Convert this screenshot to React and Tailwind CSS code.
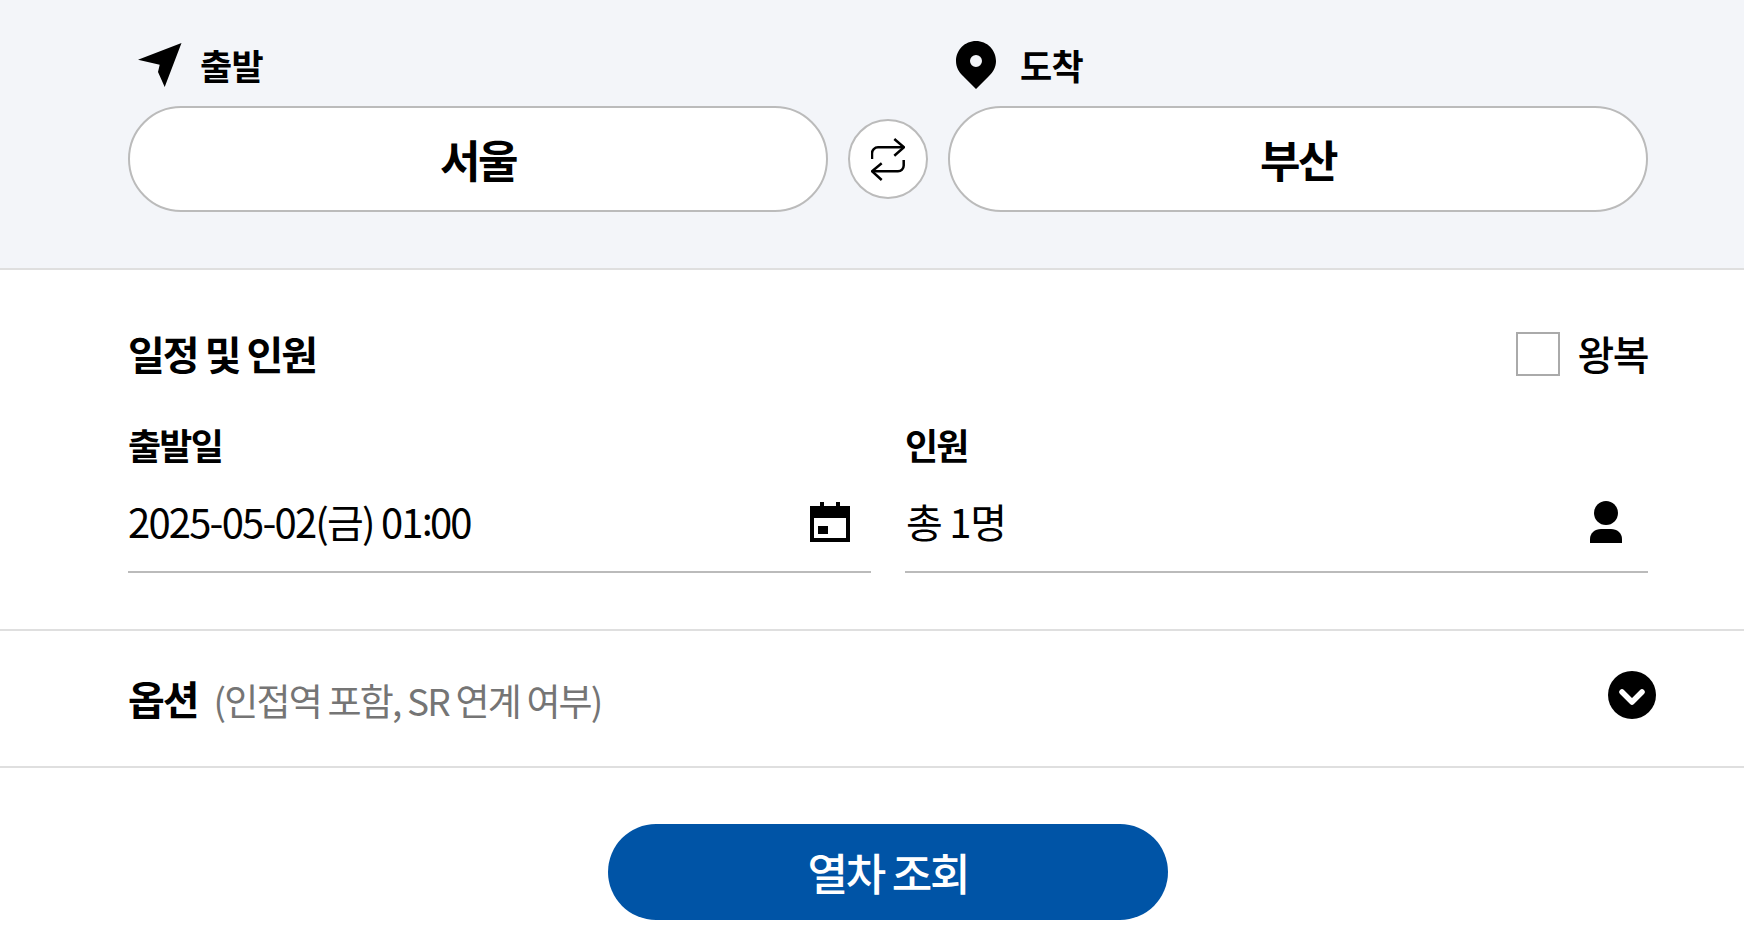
const cjk = "font-['Noto_Sans_CJK_KR','Noto_Sans',sans-serif]";

function PlaneIcon() {
  return (
    <svg viewBox="0 0 44 44" className="w-[44px] h-[44px] ml-[2px]">
      <path d="M43.500 0 L0 16.700 L21.700 21.700 L20 29 L26.700 44 Z" fill="#000" />
    </svg>
  );
}

function PinIcon() {
  return (
    <svg viewBox="0 0 40 48" className="w-[40px] h-[48px]">
      <path fillRule="evenodd" d="M20 0C9 0 0 8.800 0 20 0 26.500 3 31 7 35L20 48 33 35C37 31 40 26.500 40 20 40 8.800 31 0 20 0Zm0 26a6 6 0 1 1 0-12 6 6 0 0 1 0 12Z" fill="#000" />
    </svg>
  );
}

function SwapIcon() {
  return (
    <svg viewBox="0 0 34 44" fill="none" stroke="#000" strokeWidth="2.500" className="w-[34px] h-[44px] mt-[1px]">
      <path d="M23.300 1l9.700 8.300-9.700 8.400" />
      <path d="M33 9.300H7a6 6 0 0 0-6 6V21" />
      <path d="M10.700 25.300L1 33.300l9.700 8.700" />
      <path d="M1 33.300H27a5.700 5.700 0 0 0 5.700-5.700V22" />
    </svg>
  );
}

function CalendarIcon() {
  return (
    <svg viewBox="0 0 40 40" className="w-[40px] h-[40px] mt-[2px]">
      <path fillRule="evenodd" d="M10 0h4v4h12V0h4v4h10v36H0V4h10V0ZM4 16v20h32V16H4Zm4 8h10v8H8v-8Z" fill="#000" />
    </svg>
  );
}

function PersonIcon() {
  return (
    <svg viewBox="0 0 32 42" className="w-[32px] h-[42px] mt-[2px]">
      <circle cx="16" cy="12" r="12" fill="#000" />
      <path d="M0 42V38C0 32 5 28 11 28H21C27 28 32 32 32 38V42Z" fill="#000" />
    </svg>
  );
}

function ChevronCircle() {
  return (
    <span className="flex w-[48px] h-[48px] mb-[8px] rounded-full bg-black">
      <svg viewBox="0 0 48 48" fill="none" stroke="#fff" strokeWidth="5.500" strokeLinecap="round" strokeLinejoin="round" className="w-[48px] h-[48px]">
        <path d="M14 21l10 10 10-10" />
      </svg>
    </span>
  );
}

function StationField({ icon, label, value }) {
  return (
    <div className="flex-1 flex flex-col">
      <div className="h-[62px] mb-[10px] flex items-center pl-[8px]">
        <span className="w-[46px] mr-[18px] flex">{icon}</span>
        <span className="text-[35px] font-bold leading-none tracking-[-0.800px] pb-[2px]">{label}</span>
      </div>
      <button className="h-[106px] bg-white border-2 border-[#bbbbbb] rounded-[53px] text-[44px] font-bold tracking-[-2.500px]">
        {value}
      </button>
    </div>
  );
}

export default function App() {
  return (
    <div className="h-[930px] overflow-hidden">
      <div className={`w-[1776px] bg-white text-black ${cjk}`}>
        {/* Station */}
        <section className="h-[270px] bg-[#f3f5f9] border-b-2 border-[#dfdfdf] pt-[34px] px-[128px]">
          <div className="flex items-end gap-[20px]">
            <StationField icon={<PlaneIcon />} label="출발" value="서울" />
            <button className="w-[80px] h-[80px] mb-[13px] shrink-0 rounded-full bg-white border-2 border-[#bbbbbb] flex items-center justify-center">
              <SwapIcon />
            </button>
            <StationField icon={<PinIcon />} label="도착" value="부산" />
          </div>
        </section>

        {/* Schedule */}
        <section className="h-[361px] border-b-2 border-[#dfdfdf] px-[128px] pt-[53px]">
          <div className="flex items-center justify-between h-[60px]">
            <h2 className="text-[40px] font-bold tracking-[-2px]">일정 및 인원</h2>
            <label className="flex items-center gap-[17px]">
              <span className="w-[44px] h-[44px] mt-[1px] bg-white border-2 border-[#aaaaaa]" />
              <span className="text-[40px] font-medium tracking-[-1.500px]">왕복</span>
            </label>
          </div>
          <div className="flex gap-[34px] mt-[39px]">
            <div className="flex-1">
              <div className="text-[36px] font-bold tracking-[-1.800px] leading-[44px]">출발일</div>
              <div className="h-[102px] mt-[5px] flex items-center justify-between border-b-2 border-[#bbbbbb] pr-[21px]">
                <span className="text-[40px] tracking-[-1.800px]">
                  2025-05-02(금) 01<span className="inline-block -translate-y-[3px] tracking-[-3px]">:</span>00
                </span>
                <CalendarIcon />
              </div>
            </div>
            <div className="flex-1">
              <div className="text-[36px] font-bold tracking-[-1.800px] leading-[44px]">인원</div>
              <div className="h-[102px] mt-[5px] flex items-center justify-between border-b-2 border-[#bbbbbb] pr-[26px]">
                <span className="text-[40px] tracking-[-1.200px] pl-[1px]">총 1명</span>
                <PersonIcon />
              </div>
            </div>
          </div>
        </section>

        {/* Options */}
        <section className="h-[137px] border-b-2 border-[#dfdfdf] pl-[128px] pr-[120px] flex items-center justify-between">
          <div className="flex items-baseline gap-[16px] pb-[2px]">
            <span className="text-[40px] font-bold tracking-[-2px]">옵션</span>
            <span className="text-[37px] text-[#757575] tracking-[-1.800px] translate-y-[1px]">(인접역 포함, SR 연계 여부)</span>
          </div>
          <ChevronCircle />
        </section>

        {/* Submit */}
        <div className="flex justify-center pt-[56px]">
          <button className="w-[560px] h-[96px] rounded-[48px] bg-[#0054a6] text-white text-[44px] font-medium tracking-[-2.200px]">
            열차 조회
          </button>
        </div>
      </div>
    </div>
  );
}
